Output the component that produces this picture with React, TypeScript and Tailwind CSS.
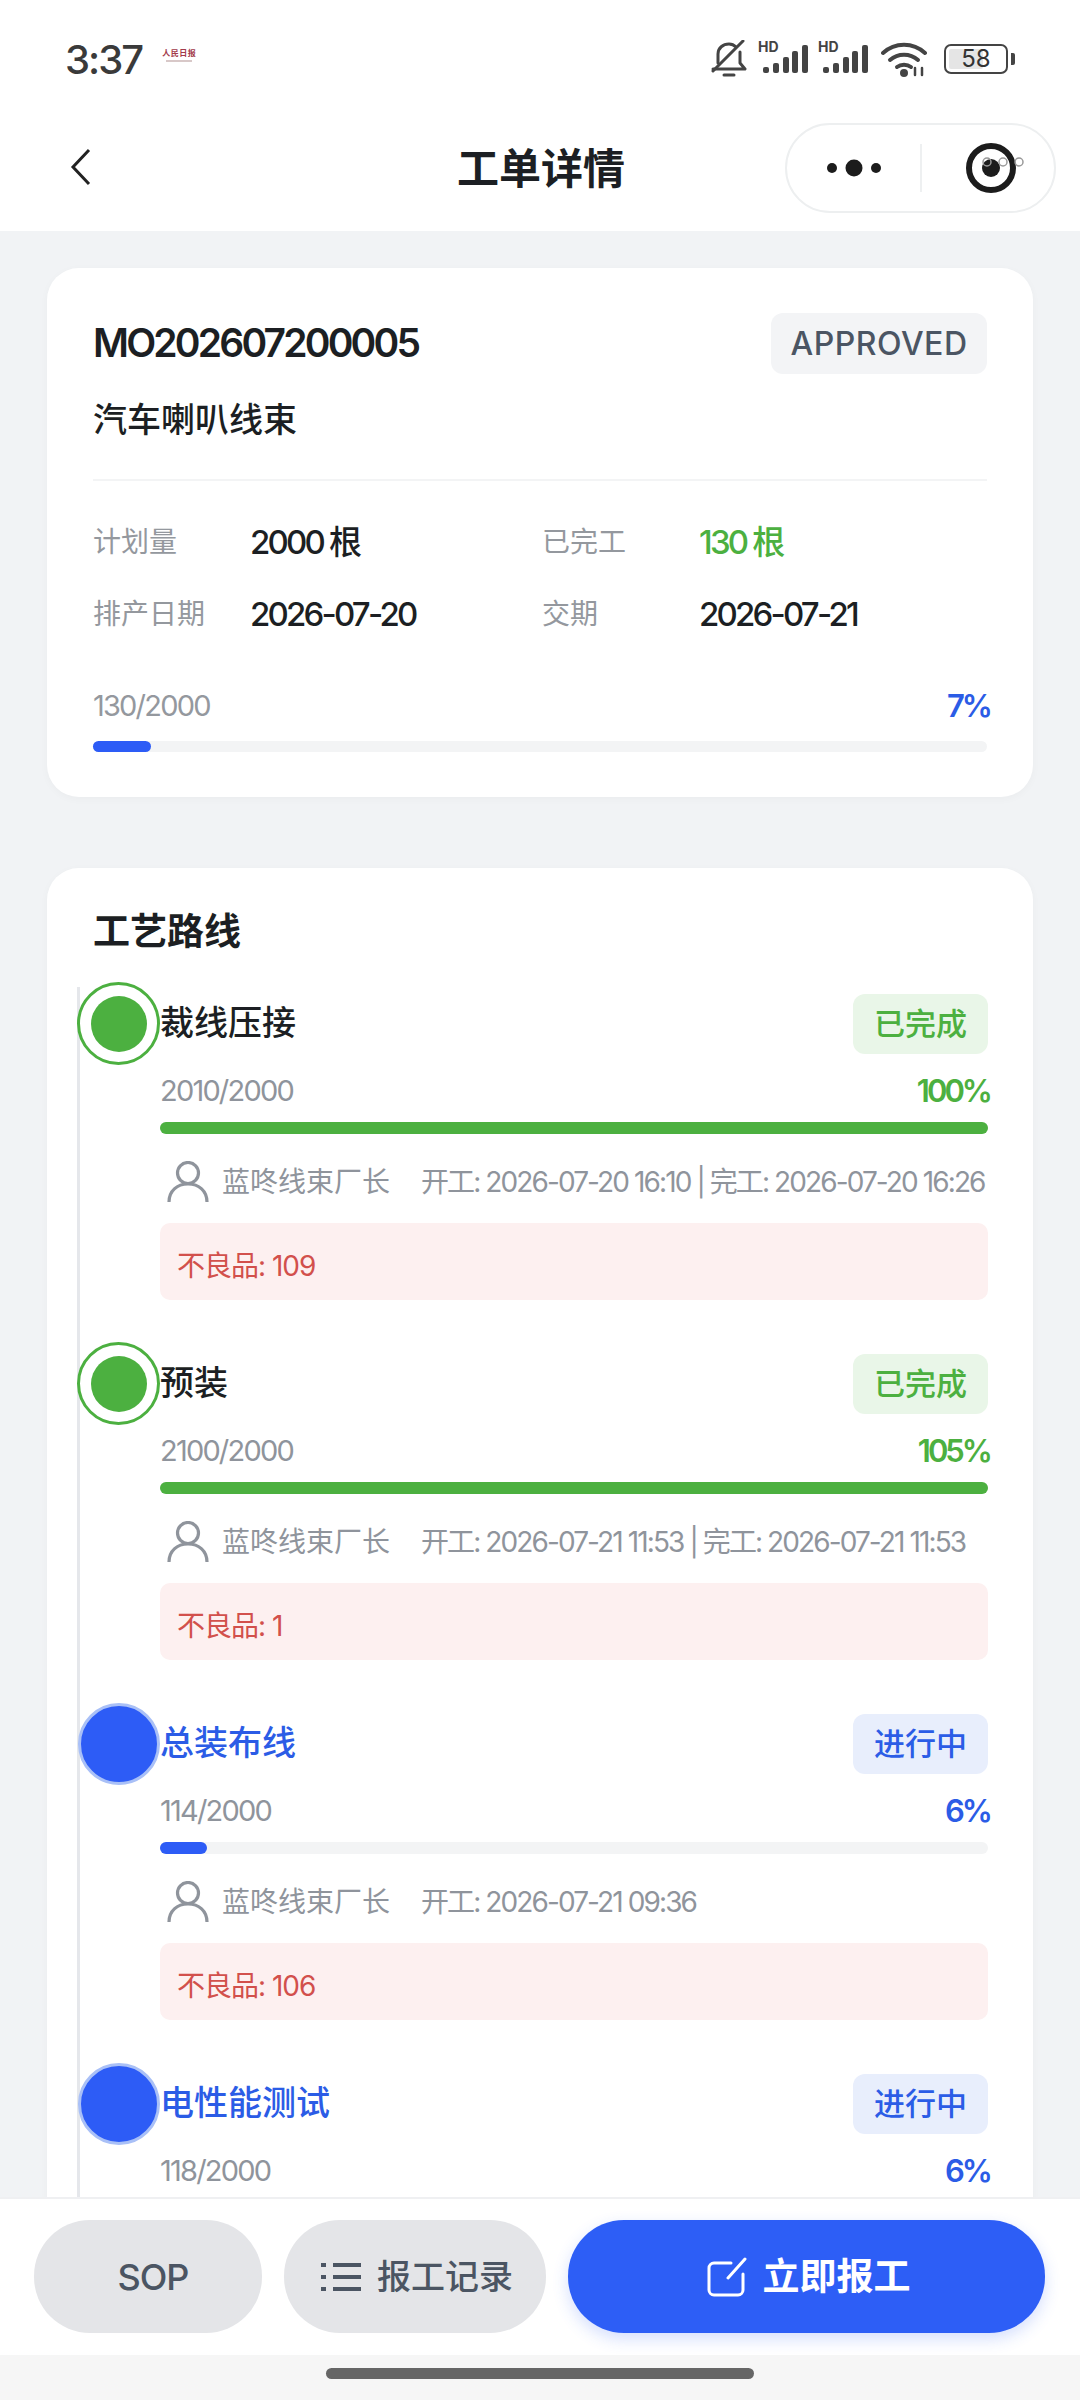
import { ReactNode } from "react";

const GREEN = "text-[#4cb040]";
const BLUE = "text-[#2b5ce6]";

const BellOff = () => (
  <svg width="36" height="38" viewBox="0 0 36 38" fill="none" stroke="#444" strokeWidth="3" strokeLinecap="round" strokeLinejoin="round">
    <path d="M7 23V14C7 8 12 4 18 4c3 0 5 1 7 3" />
    <path d="M29 12v11l5 6H2" />
    <path d="M13 35h10" />
    <path d="M2 31 32 1" />
  </svg>
);

const Signal = () => (
  <div className="relative h-[32px] w-[50px]">
    <span className="absolute left-0 top-[-3px] text-[14px] leading-[14px] font-bold text-[#444]">HD</span>
    <svg className="absolute left-0 top-0" width="50" height="32" viewBox="0 0 50 32" fill="#444">
      <rect x="5" y="24" width="6" height="6" rx="2" />
      <rect x="15" y="20" width="6" height="10" rx="2" />
      <rect x="25" y="14" width="6" height="16" rx="2" />
      <rect x="34" y="8" width="6" height="22" rx="2" />
      <rect x="44" y="2" width="6" height="28" rx="2" />
    </svg>
  </div>
);

const Wifi = () => (
  <svg width="46" height="36" viewBox="0 0 46 36" fill="none" stroke="#444" strokeWidth="4" strokeLinecap="round">
    <path d="M2 12C14 1 32 1 44 12" />
    <path d="M9 19c8-7 20-7 28 0" />
    <path d="M16 26c4-3 10-3 14 0" />
    <circle cx="23" cy="32" r="2" fill="#444" />
    <path d="M34 27v7M41 27v7" strokeWidth="2.5" />
  </svg>
);

const Battery = () => (
  <div className="ml-[4px] flex items-center gap-[3px]">
    <div className="relative flex h-[30px] w-[64px] items-center justify-center rounded-[7px] border-[2.5px] border-[#444]">
      <div className="absolute left-[3px] top-[3px] bottom-[3px] w-[34px] rounded-[2px] bg-[#e5e5e5]" />
      <span className="relative text-[24px] leading-none text-[#333]">58</span>
    </div>
    <div className="h-[12px] w-[4px] rounded-r-[2px] bg-[#444]" />
  </div>
);

const UserIcon = () => (
  <svg className="shrink-0" width="42" height="42" viewBox="0 0 42 42" fill="none" stroke="#8f949c" strokeWidth="3.2">
    <circle cx="21" cy="12" r="10.5" />
    <path d="M2 41c0-11 8-18 19-18s19 7 19 18" />
  </svg>
);

const Field = ({ label, children }: { label: string; children: ReactNode }) => (
  <div className="flex items-center">
    <span className="w-[157px] text-[28px] leading-[40px] text-[#94989e]">{label}</span>
    <span className="text-[33px] leading-[40px] font-medium tracking-[-2.8px]">{children}</span>
  </div>
);

const Bar = ({ pct, color, h }: { pct: number; color: string; h: string }) => (
  <div className={`w-full rounded-full bg-[#f3f4f5] ${h}`}>
    <div className={`h-full rounded-full ${color}`} style={{ width: `${pct}%` }} />
  </div>
);

type StepProps = {
  name: string;
  done?: boolean;
  count: string;
  pct: string;
  width: number;
  time?: string;
  defect?: string;
  cut?: boolean;
};

const Step = ({ name, done, count, pct, width, time, defect, cut }: StepProps) => (
  <div className="relative pt-[7px] pb-[47px] pl-[80px]">
    {done ? (
      <div className="absolute left-[-3px] top-[-5px] flex h-[83px] w-[83px] items-center justify-center rounded-full border-[3px] border-[#4cb040] bg-white">
        <div className="h-[56px] w-[56px] rounded-full bg-[#4cb040]" />
      </div>
    ) : (
      <div className="absolute left-[-2px] top-[-4px] h-[82px] w-[82px] rounded-full border-[3px] border-[#a9c0f7] bg-[#2d5cf6]" />
    )}
    <div className="flex h-[60px] items-center justify-between">
      <span className={`mb-[3px] text-[34px] font-medium ${done ? "text-[#1c1f23]" : BLUE}`}>{name}</span>
      <span
        className={`flex h-[60px] w-[135px] items-center justify-center rounded-[12px] text-[31px] font-medium ${
          done ? "bg-[#e9f6e8] " + GREEN : "bg-[#e8eefc] " + BLUE
        }`}
      >
        {done ? "已完成" : "进行中"}
      </span>
    </div>
    <div className="mt-[19px] flex h-[36px] items-center justify-between">
      <span className="text-[29px] tracking-[-1.8px] text-[#8f949c]">{count}</span>
      <span className={`mr-[-2px] text-[31px] font-semibold tracking-[-3px] ${done ? GREEN : BLUE}`}>{pct}</span>
    </div>
    {!cut && (
      <>
        <div className="mt-[13px]">
          <Bar pct={width} color={done ? "bg-[#4cb040]" : "bg-[#2d5cf6]"} h="h-[12px]" />
        </div>
        <div className="mt-[27px] flex h-[42px] items-center pl-[7px]">
          <UserIcon />
          <span className="ml-[13px] shrink-0 whitespace-nowrap text-[28px] text-[#8f949c]">蓝咚线束厂长</span>
          <span className="ml-[31px] whitespace-nowrap text-[28px] tracking-[-1.9px] text-[#8f949c]">{time}</span>
        </div>
        <div className="mt-[20px] flex h-[77px] items-center rounded-[10px] bg-[#fdf0f0] pl-[17px] pt-[9px] text-[28px] tracking-[-1px] text-[#d2504c]">
          {defect}
        </div>
      </>
    )}
  </div>
);

const App = () => {
  return (
    <div className="flex h-screen w-full flex-col overflow-hidden bg-[#f1f3f5] font-['Inter','Noto_Sans_CJK_SC',sans-serif] text-[#1c1f23]">
      {/* 顶部 */}
      <header className="bg-white">
        <div className="flex h-[105px] items-start justify-between pt-[40px] pl-[65px] pr-[65px]">
          <div className="flex items-start">
            <span className="text-[40px] leading-[40px] font-medium tracking-[-2px] text-[#3a3a3a]">3:37</span>
            <div className="ml-[20px] mt-[8px] flex flex-col items-center text-[#a23a4a]">
              <span className="font-['Liberation_Serif','Noto_Sans_CJK_SC',serif] text-[8px] leading-[12px] font-bold tracking-[0.5px]">人民日报</span>
              <span className="h-[2px] w-[26px] bg-[#d8c8c8]" />
            </div>
          </div>
          <div className="flex items-center">
            <BellOff />
            <div className="ml-[11px] flex items-center gap-[10px]">
              <Signal />
              <Signal />
            </div>
            <div className="ml-[13px]">
              <Wifi />
            </div>
            <div className="ml-[13px]">
              <Battery />
            </div>
          </div>
        </div>
        <div className="relative flex h-[126px] items-center justify-center">
          <svg className="absolute left-[70px] top-[43px]" width="22" height="38" viewBox="0 0 22 38" fill="none" stroke="#222" strokeWidth="3">
            <path d="M19 2 3 19l16 17" />
          </svg>
          <h1 className="mr-[-2px] text-[42px] font-semibold">工单详情</h1>
          <div className="absolute right-[24px] top-[18px] flex h-[90px] w-[271px] items-center rounded-full border-2 border-[#edeff0]">
            <svg className="ml-[36px]" width="60" height="20" viewBox="0 0 60 20" fill="#1c1c1c">
              <circle cx="9" cy="10" r="5" />
              <circle cx="31" cy="10" r="8.5" />
              <circle cx="53" cy="10" r="5" />
            </svg>
            <div className="ml-[37px] h-[48px] w-[2px] bg-[#eef0f1]" />
            <svg className="ml-[44px]" width="62" height="52" viewBox="0 0 62 52" fill="none">
              <circle cx="25" cy="26" r="22" stroke="#1c1c1c" strokeWidth="6" />
              <circle cx="25" cy="26" r="9" fill="#1c1c1c" />
              <circle cx="21" cy="20" r="4" stroke="#999" strokeWidth="1.5" />
              <circle cx="37" cy="20" r="4" stroke="#999" strokeWidth="1.5" />
              <circle cx="53" cy="20" r="4" stroke="#999" strokeWidth="1.5" />
            </svg>
          </div>
        </div>
      </header>

      <main className="min-h-0 flex-1 overflow-hidden px-[47px] pt-[37px]">
        {/* 工单信息 */}
        <section className="h-[529px] rounded-[32px] bg-white px-[46px] pt-[45px] shadow-[0_2px_8px_rgba(0,0,0,0.03)]">
          <div className="flex h-[61px] items-center justify-between">
            <span className="text-[39px] font-semibold tracking-[-2.8px]">MO202607200005</span>
            <span className="flex h-[61px] w-[216px] items-center justify-center rounded-[12px] bg-[#f3f4f6] text-[32px] font-medium tracking-[0.5px] text-[#4b5563]">
              APPROVED
            </span>
          </div>
          <p className="mt-[22px] text-[34px] leading-[48px] font-medium">汽车喇叭线束</p>
          <div className="mt-[35px] h-[2px] bg-[#f3f4f5]" />
          <div className="mt-[41px] grid grid-cols-[449px_1fr] gap-y-[32px]">
            <Field label="计划量">2000 根</Field>
            <Field label="已完工">
              <span className={GREEN}>130 根</span>
            </Field>
            <Field label="排产日期">2026-07-20</Field>
            <Field label="交期">2026-07-21</Field>
          </div>
          <div className="mt-[52px] flex h-[40px] items-center justify-between">
            <span className="text-[29px] tracking-[-1.8px] text-[#94989e]">130/2000</span>
            <span className={`mr-[-3px] text-[31px] font-semibold tracking-[-3px] ${BLUE}`}>7%</span>
          </div>
          <div className="mt-[15px]">
            <Bar pct={6.5} color="bg-[#2d5cf6]" h="h-[11px]" />
          </div>
        </section>

        {/* 工艺路线 */}
        <section className="mt-[71px] rounded-t-[32px] bg-white pt-[40px] shadow-[0_2px_8px_rgba(0,0,0,0.03)]">
          <h2 className="pl-[46px] text-[37px] leading-[48px] font-semibold">工艺路线</h2>
          <div className="ml-[30px] mt-[31px] mr-[45px] border-l-[3px] border-[#e5e7eb]">
            <Step name="裁线压接" done count="2010/2000" pct="100%" width={100} time="开工: 2026-07-20 16:10 | 完工: 2026-07-20 16:26" defect="不良品: 109" />
            <Step name="预装" done count="2100/2000" pct="105%" width={100} time="开工: 2026-07-21 11:53 | 完工: 2026-07-21 11:53" defect="不良品: 1" />
            <Step name="总装布线" count="114/2000" pct="6%" width={5.7} time="开工: 2026-07-21 09:36" defect="不良品: 106" />
            <Step name="电性能测试" count="118/2000" pct="6%" width={5.9} cut />
          </div>
        </section>
      </main>

      {/* 底部操作 */}
      <footer className="relative z-10 border-t-2 border-[#eff0f2] bg-white">
        <div className="flex h-[156px] gap-[22px] pl-[34px] pr-[35px] pt-[21px]">
          <button className="h-[113px] w-[228px] rounded-[56px] bg-[#e4e5e8] pl-[10px] text-[36px] font-medium tracking-[-1px] text-[#4b5563]">
            SOP
          </button>
          <button className="flex h-[113px] w-[262px] items-center justify-center gap-[16px] rounded-[56px] bg-[#e4e5e8] pl-[4px] text-[34px] font-medium text-[#4b5563]">
            <svg width="40" height="30" viewBox="0 0 40 30" fill="#4b5563">
              <rect x="0" y="1" width="5" height="4" />
              <rect x="12" y="1" width="28" height="4" />
              <rect x="0" y="13" width="5" height="4" />
              <rect x="12" y="13" width="28" height="4" />
              <rect x="0" y="25" width="5" height="4" />
              <rect x="12" y="25" width="28" height="4" />
            </svg>
            报工记录
          </button>
          <button className="flex h-[113px] flex-1 items-center justify-center gap-[16px] rounded-[56px] bg-[#2d5ef6] pl-[4px] text-[37px] font-semibold text-white shadow-[0_6px_16px_rgba(45,94,246,0.2)]">
            <svg width="40" height="40" viewBox="0 0 40 40" fill="none" stroke="#fff" strokeWidth="3" strokeLinecap="round">
              <path d="M24 6H7a5 5 0 0 0-5 5v22a5 5 0 0 0 5 5h24a5 5 0 0 0 5-5V17" />
              <path d="M21 21 38 2" />
            </svg>
            立即报工
          </button>
        </div>
        <div className="flex h-[45px] justify-center bg-[#f6f6f6] pt-[13px]">
          <div className="h-[11px] w-[428px] rounded-full bg-[#666]" />
        </div>
      </footer>
    </div>
  );
};

export default App;
